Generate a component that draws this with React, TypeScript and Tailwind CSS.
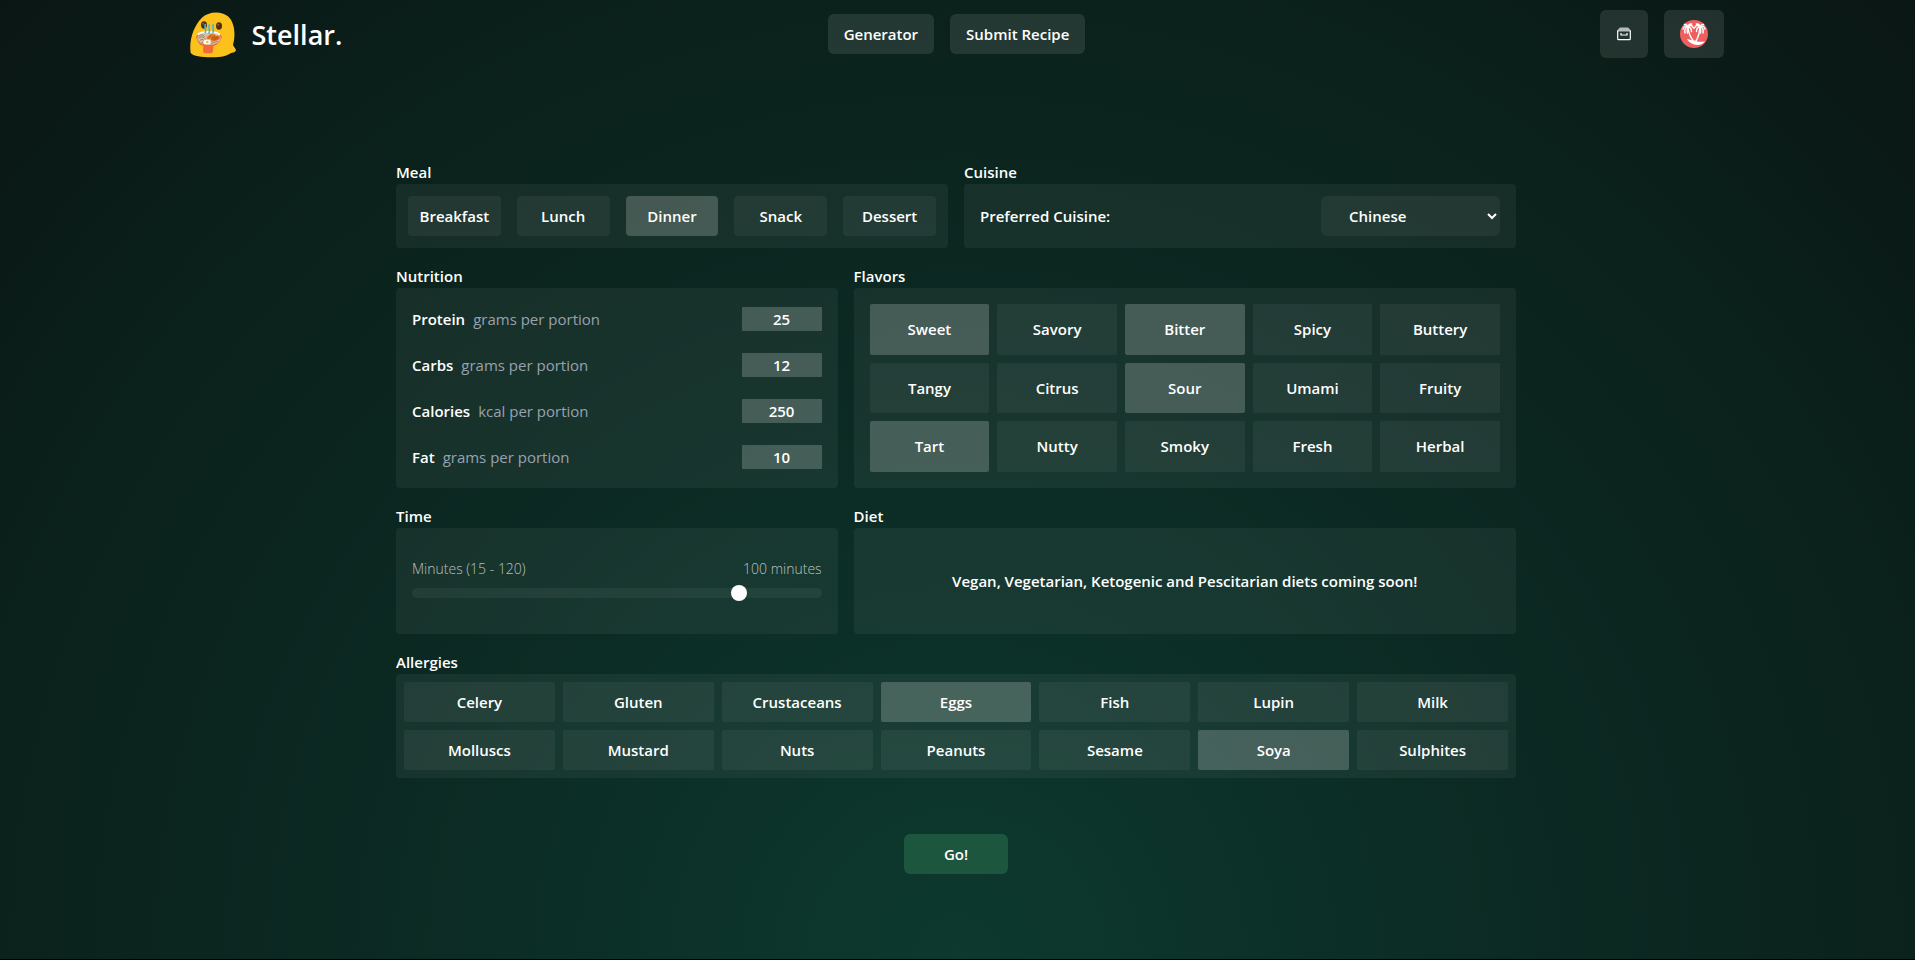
import { useState } from 'react';

const meals = ['Breakfast', 'Lunch', 'Dinner', 'Snack', 'Dessert'];

const cuisines = ['Chinese', 'Italian', 'Indian', 'Japanese', 'Mexican', 'Thai'];

const nutrition = [
    { name: 'Protein', unit: 'grams per portion', value: 25 },
    { name: 'Carbs', unit: 'grams per portion', value: 12 },
    { name: 'Calories', unit: 'kcal per portion', value: 250 },
    { name: 'Fat', unit: 'grams per portion', value: 10 },
];

const flavors = [
    'Sweet', 'Savory', 'Bitter', 'Spicy', 'Buttery',
    'Tangy', 'Citrus', 'Sour', 'Umami', 'Fruity',
    'Tart', 'Nutty', 'Smoky', 'Fresh', 'Herbal',
];

const allergies = [
    'Celery', 'Gluten', 'Crustaceans', 'Eggs', 'Fish', 'Lupin', 'Milk',
    'Molluscs', 'Mustard', 'Nuts', 'Peanuts', 'Sesame', 'Soya', 'Sulphites',
];

const Logo = () => (
    <svg className="h-[46px] w-[46px]" viewBox="57 38 138 138" aria-hidden="true">
        <path
            d="M58 150C56 116 70 78 92 56C112 36 150 34 171 51C192 70 194 108 186 136C189 145 197 149 194 155C190 161 184 158 179 162C162 173 140 174 120 174C92 174 66 170 59 161Z"
            fill="#fcc21b"
        />
        <ellipse cx="99" cy="77" rx="9" ry="11" fill="#4e2f14" />
        <ellipse cx="144" cy="80" rx="9" ry="11" fill="#4e2f14" />
        <circle cx="97" cy="73" r="3" fill="#8a6236" />
        <circle cx="142" cy="76" r="3" fill="#8a6236" />
        <path d="M76 112C78 128 86 137 97 140L96 155Q97 162 105 162H119Q126 162 126 155L127 140C140 136 150 127 152 112Z" fill="#f0693a" />
        <ellipse cx="114" cy="113" rx="38" ry="17" fill="#f0693a" />
        <ellipse cx="114" cy="117" rx="35" ry="20" fill="#d9c0a4" />
        <path
            d="M83 111C90 104 97 106 102 112M82 117C90 110 98 112 103 120M86 124C92 118 98 120 101 127M92 130C98 127 101 129 104 133M118 130C126 122 138 120 146 118M122 133C130 128 136 127 141 125"
            stroke="#a27a58"
            strokeWidth="3"
            fill="none"
        />
        <path d="M80 106C90 96 134 94 147 106" stroke="#fff" strokeWidth="5" fill="none" />
        <path d="M106 118C110 106 122 101 134 106C130 116 120 122 106 118Z" fill="#ea7a1e" />
        <path d="M118 122C122 112 134 106 147 112C144 122 132 127 118 122Z" fill="#d96412" />
        <path d="M113 117L121 106M122 118L132 108M129 123L139 112" stroke="#8f4a18" strokeWidth="2" />
        <ellipse cx="108" cy="128" rx="11" ry="7" fill="#fff" />
        <circle cx="109" cy="128" r="4" fill="#fbb91c" />
        <path
            d="M103 76C98 82 108 89 103 99M115 77C110 84 119 90 114 101M127 76C122 84 131 88 126 99"
            stroke="#3fb6e3"
            strokeWidth="5"
            strokeLinecap="round"
            fill="none"
        />
    </svg>
);

const BagIcon = () => (
    <svg className="h-[14px] w-[14px]" viewBox="0 0 14 14" fill="none" aria-hidden="true">
        <path d="M3 0.5H11L13.500 3V4.500H0.500V3Z" fill="#b4bcba" />
        <path d="M0.700 3.500V11.700Q0.700 12.700 1.700 12.700H12.300Q13.300 12.700 13.300 11.700V3.500" stroke="#fff" strokeWidth="1.200" />
        <path d="M4 6V8H10V6" stroke="#fff" strokeWidth="1.200" />
    </svg>
);

const Avatar = () => (
    <svg className="h-7 w-7" viewBox="0 0 28 28" aria-hidden="true">
        <circle cx="14" cy="14" r="14" fill="#ee5f5f" />
        <g fill="none" stroke="#fff" strokeLinecap="round">
            <path d="M8 7C8.500 13 10 17 13.500 21M20 7C19.500 13 18.500 17 16 21" strokeWidth="1.500" />
            <path
                d="M8 7C6 5 4 6 3 9M8 7C5 7 4.500 10 5 13M8 7C7 9 7 11 7.500 13M8 7C10 4 12 5 13.500 8M8 7C10.500 7 11.500 9 11.500 11.500M8 7C7 4.500 6 4 4.500 4.500M8 7C8.500 4.500 10 3.500 11.500 4"
                strokeWidth="1.400"
            />
            <path
                d="M20 7C22 5 24 6 25 9M20 7C23 7 23.500 10 23 13M20 7C21 9 21 11 20.500 13M20 7C18 4 16 5 14.500 8M20 7C17.500 7 16.500 9 16.500 11.500M20 7C21 4.500 22 4 23.500 4.500M20 7C19.500 4.500 18 3.500 16.500 4"
                strokeWidth="1.400"
            />
        </g>
        <path d="M7 19C10 20 12 20 14 20.500C17 22 21 22 25 21.500C22 25 18 25.500 14 24.500C11 23.500 8 21.500 7 19Z" fill="#fff" />
    </svg>
);

type PanelProps = {
    title: string;
    className: string;
    children: React.ReactNode;
};

const Panel = ({ title, className, children }: PanelProps) => (
    <section className="flex flex-col">
        <h2 className="leading-6">{title}</h2>
        <div className={`grow rounded bg-white/5 ${className}`}>{children}</div>
    </section>
);

type ToggleProps = {
    label: string;
    active: boolean;
    className: string;
    onClick: () => void;
};

const Toggle = ({ label, active, className, onClick }: ToggleProps) => (
    <button
        type="button"
        aria-pressed={active}
        onClick={onClick}
        className={`${className} ${active ? 'bg-white/20' : 'bg-white/5 hover:bg-white/10'}`}
    >
        {label}
    </button>
);

const toggleItem = (list: string[], item: string) =>
    list.includes(item) ? list.filter((entry) => entry !== item) : [...list, item];

const App = () => {
    const [meal, setMeal] = useState('Dinner');
    const [picked, setPicked] = useState(['Sweet', 'Bitter', 'Sour', 'Tart']);
    const [avoided, setAvoided] = useState(['Eggs', 'Soya']);
    const [minutes, setMinutes] = useState(100);

    return (
        <div className="min-h-screen border-b border-black bg-[#0a1614] bg-[radial-gradient(circle_farthest-corner_at_50%_100%,#0d392e_0%,#0b2a23_42%,#0b221c_70%,#0a1614_100%)] font-['Open_Sans',sans-serif] text-[15px] font-semibold text-white">
            <header className="mx-auto flex max-w-[1536px] items-center py-[10px] pr-0.5">
                <div className="flex flex-1 items-center gap-4 pt-0.5">
                    <Logo />
                    <span className="text-[27px] leading-8">Stellar.</span>
                </div>
                <nav className="flex gap-4">
                    <a href="#" className="rounded-md bg-white/10 px-4 py-2 leading-6">
                        Generator
                    </a>
                    <a href="#" className="rounded-md bg-white/10 px-4 py-2 leading-6">
                        Submit Recipe
                    </a>
                </nav>
                <div className="flex flex-1 justify-end gap-4">
                    <button
                        type="button"
                        aria-label="Basket"
                        className="flex h-12 w-12 items-center justify-center rounded-md bg-white/10"
                    >
                        <BagIcon />
                    </button>
                    <button
                        type="button"
                        aria-label="Account"
                        className="flex h-12 items-center rounded-md bg-white/10 px-4"
                    >
                        <Avatar />
                    </button>
                </div>
            </header>

            <main className="pt-[92px] pr-[3px]">
                <form
                    className="mx-auto flex max-w-[1120px] flex-col gap-4"
                    onSubmit={(e) => e.preventDefault()}
                >
                    <div className="grid grid-cols-2 gap-4">
                        <Panel title="Meal" className="grid grid-cols-5 gap-4 p-3">
                            {meals.map((name) => (
                                <Toggle
                                    key={name}
                                    label={name}
                                    active={meal === name}
                                    className="h-10 rounded-sm"
                                    onClick={() => setMeal(name)}
                                />
                            ))}
                        </Panel>
                        <Panel title="Cuisine" className="flex items-center justify-between px-4">
                            <label htmlFor="cuisine">Preferred Cuisine:</label>
                            <select
                                id="cuisine"
                                className="h-10 w-[179px] rounded-md bg-white/5 pl-6"
                            >
                                {cuisines.map((name) => (
                                    <option key={name} className="text-black">
                                        {name}
                                    </option>
                                ))}
                            </select>
                        </Panel>
                    </div>

                    <div className="grid grid-cols-[2fr_3fr] gap-4">
                        <Panel title="Nutrition" className="flex flex-col gap-4 p-4">
                            {nutrition.map((row) => (
                                <div key={row.name} className="flex flex-1 items-center justify-between">
                                    <label htmlFor={row.name} className="flex gap-2">
                                        {row.name}
                                        <span className="font-normal text-gray-400">{row.unit}</span>
                                    </label>
                                    <input
                                        id={row.name}
                                        type="text"
                                        inputMode="numeric"
                                        defaultValue={row.value}
                                        className="h-6 w-20 rounded-[1px] bg-white/20 text-center"
                                    />
                                </div>
                            ))}
                        </Panel>
                        <Panel title="Flavors" className="grid h-[200px] grid-cols-5 gap-2 p-4">
                            {flavors.map((name) => (
                                <Toggle
                                    key={name}
                                    label={name}
                                    active={picked.includes(name)}
                                    className="rounded-[2px]"
                                    onClick={() => setPicked(toggleItem(picked, name))}
                                />
                            ))}
                        </Panel>
                    </div>

                    <div className="grid grid-cols-[2fr_3fr] gap-4">
                        <Panel title="Time" className="flex flex-col justify-center px-4 py-[29px]">
                            <div className="flex justify-between text-sm leading-6 font-light text-white/70">
                                <label htmlFor="minutes">Minutes (15 - 120)</label>
                                <output htmlFor="minutes">{minutes} minutes</output>
                            </div>
                            <div className="flex h-6 items-center">
                                <input
                                    id="minutes"
                                    type="range"
                                    min={15}
                                    max={120}
                                    value={minutes}
                                    onChange={(e) => setMinutes(Number(e.target.value))}
                                    className="h-[10px] w-full appearance-none rounded-full bg-white/5 [&::-webkit-slider-thumb]:h-4 [&::-webkit-slider-thumb]:w-4 [&::-webkit-slider-thumb]:appearance-none [&::-webkit-slider-thumb]:rounded-full [&::-webkit-slider-thumb]:bg-white"
                                />
                            </div>
                        </Panel>
                        <Panel title="Diet" className="flex items-center justify-center">
                            <p>Vegan, Vegetarian, Ketogenic and Pescitarian diets coming soon!</p>
                        </Panel>
                    </div>

                    <Panel title="Allergies" className="grid grid-cols-7 gap-2 p-2">
                        {allergies.map((name) => (
                            <Toggle
                                key={name}
                                label={name}
                                active={avoided.includes(name)}
                                className="h-10 rounded-[2px]"
                                onClick={() => setAvoided(toggleItem(avoided, name))}
                            />
                        ))}
                    </Panel>

                    <button
                        type="submit"
                        className="mt-10 h-10 self-center rounded-md bg-[#1c563e] px-10"
                    >
                        Go!
                    </button>
                </form>
            </main>
        </div>
    );
};

export default App;
